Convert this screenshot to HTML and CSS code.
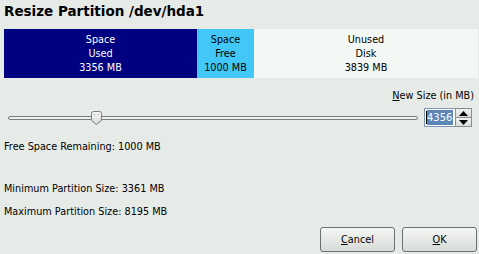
FILE: index.html
```html
<!DOCTYPE html>
<html>
<head>
<meta charset="utf-8">
<link rel="stylesheet" href="styles.css">
</head>
<body>
<div class="dialog">
  <h1 class="title">Resize Partition /dev/hda1</h1>
  <div class="bar">
    <div class="seg used"><span>Space</span><span>Used</span><span>3356 MB</span></div>
    <div class="seg free"><span>Space</span><span>Free</span><span>1000 MB</span></div>
    <div class="seg unused"><span>Unused</span><span>Disk</span><span>3839 MB</span></div>
  </div>
  <div class="newsize"><span class="u">N</span>ew Size (in MB)</div>
  <div class="sliderrow">
    <div class="slider">
      <div class="groove"></div>
      <svg class="handle" width="11" height="14" viewBox="0 0 11 14">
        <defs>
          <linearGradient id="hg" x1="0" y1="0" x2="0" y2="1">
            <stop offset="0" stop-color="#f6f8f6"/>
            <stop offset="1" stop-color="#d6dad6"/>
          </linearGradient>
        </defs>
        <path d="M2.5 0.5 H8.5 Q10.5 0.5 10.5 2.5 V9.5 L5.5 13.5 L0.5 9.5 V2.5 Q0.5 0.5 2.5 0.5 Z" fill="url(#hg)" stroke="#7a7e7a"/>
        <rect x="3" y="3" width="1" height="1" fill="#9a9e9a"/>
        <rect x="7" y="3" width="1" height="1" fill="#9a9e9a"/>
      </svg>
    </div>
    <div class="spin">
      <div class="entry"><span class="cursor"></span><span class="sel">4356</span></div>
      <div class="arrows">
        <div class="arr up"><svg width="9" height="5" viewBox="0 0 9 5"><path d="M4.5 0 L9 5 H0 Z" fill="#000"/></svg></div>
        <div class="arr down"><svg width="9" height="5" viewBox="0 0 9 5"><path d="M0 0 H9 L4.5 5 Z" fill="#000"/></svg></div>
      </div>
    </div>
  </div>
  <p class="info first">Free Space Remaining: 1000 MB</p>
  <p class="info min">Minimum Partition Size: 3361 MB</p>
  <p class="info">Maximum Partition Size: 8195 MB</p>
  <div class="buttons">
    <button class="btn"><span class="u">C</span>ancel</button>
    <button class="btn"><span class="u">O</span>K</button>
  </div>
</div>
</body>
</html>
```
FILE: styles.css
```css
html, body {
  margin: 0;
  padding: 0;
  background: #e7ebe7;
}
body {
  width: 479px;
  height: 254px;
  overflow: hidden;
  font-family: "DejaVu Sans", sans-serif;
  font-size: 9.7px;
  color: #000;
}
.dialog {
  display: flex;
  flex-direction: column;
  padding: 0 1px 0 4px;
}
.title {
  margin: 3px 0 0 0;
  font-size: 13.5px;
  font-weight: bold;
  line-height: 16px;
  height: 16px;
}
.bar {
  margin-top: 10px;
  display: flex;
  height: 49px;
  width: 474px;
}
.seg {
  display: flex;
  flex-direction: column;
  align-items: center;
  justify-content: center;
  line-height: 14px;
}
.used { width: 193px; background: #000080; color: #fff; }
.free { width: 57px; background: #42c8f6; color: #000; }
.unused { flex: 1; background: #f4f8f4; color: #000; }
.newsize {
  margin-top: 11px;
  align-self: flex-end;
  margin-right: 4px;
  line-height: 14px;
}
.u { text-decoration: underline; }
.sliderrow {
  margin-top: 5px;
  display: flex;
  align-items: center;
  height: 19px;
}
.slider {
  position: relative;
  margin-left: 4px;
  width: 410px;
  height: 19px;
  display: flex;
  align-items: center;
}
.groove {
  flex: 1;
  height: 2px;
  border: 1px solid #7a7e7a;
  border-radius: 2px;
  background: #eef0ee;
}
.handle {
  position: absolute;
  left: 83px;
  top: 3px;
}
.spin {
  margin-left: 6px;
  display: flex;
  height: 19px;
}
.entry {
  width: 29px;
  height: 17px;
  border: 1px solid #7d94b4;
  background: #fff;
  display: flex;
  align-items: center;
  padding-left: 1px;
}
.cursor {
  width: 1px;
  height: 13px;
  background: #000;
}
.sel {
  background: #5d86b8;
  color: #fff;
  font-size: 10px;
  line-height: 15px;
  padding-right: 1px;
}
.arrows {
  width: 15px;
  display: flex;
  flex-direction: column;
  border: 1px solid #8a8e8a;
  border-left: none;
  height: 17px;
}
.arr {
  flex: 1;
  display: flex;
  align-items: center;
  justify-content: center;
  background: linear-gradient(#f2f4f2, #d8dcd8);
}
.arr.up { border-bottom: 1px solid #8a8e8a; }
.info {
  margin: 0;
  line-height: 14px;
}
.info.first { margin-top: 13px; }
.info.min { margin-top: 28px; }
.info + .info:not(.min) { margin-top: 9px; }
.buttons {
  margin-top: 8px;
  display: flex;
  justify-content: flex-end;
  gap: 7px;
  padding-right: 1px;
}
.btn {
  width: 75px;
  height: 25px;
  border: 1px solid #6e726e;
  border-radius: 3px;
  background: linear-gradient(#f4f6f4, #d8dcd8);
  font-family: "DejaVu Sans", sans-serif;
  font-size: 9.7px;
  color: #000;
  padding: 0;
}
```
